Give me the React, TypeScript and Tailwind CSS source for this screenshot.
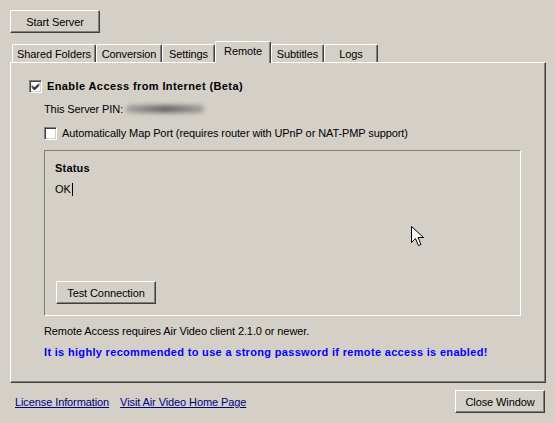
const btnClass =
  'flex items-center justify-center border border-t-white border-l-white border-r-[#404040] border-b-[#404040] bg-[#d4d0c8] shadow-[inset_-1px_-1px_0_#808080] text-[11px] text-black'

const tabs = [
  { label: 'Shared Folders', width: 'w-[84px]' },
  { label: 'Conversion', width: 'w-[66px]' },
  { label: 'Settings', width: 'w-[53px]' },
  { label: 'Remote', width: 'w-[56px]', active: true },
  { label: 'Subtitles', width: 'w-[53px]' },
  { label: 'Logs', width: 'w-[54px]' },
]

function Checkbox({ checked }: { checked?: boolean }) {
  return (
    <div className="flex h-[13px] w-[13px] shrink-0 items-center justify-center border border-t-[#808080] border-l-[#808080] border-r-white border-b-white bg-white shadow-[inset_1px_1px_0_#404040,inset_-1px_-1px_0_#d4d0c8]">
      {checked && (
        <svg width="9" height="9" viewBox="0 0 9 9">
          <path d="M1 3.5 L3.5 6 L8 1.5 M1 4.5 L3.5 7 L8 2.5 M1 5.5 L3.5 8 L8 3.5" stroke="#000" strokeWidth="1" fill="none" />
        </svg>
      )}
    </div>
  )
}

function Tab({ label, width, active }: { label: string; width: string; active?: boolean }) {
  if (active) {
    return (
      <div
        className={`relative z-10 -mb-[1px] flex h-[22px] items-start justify-center rounded-t-[2px] border border-b-0 border-t-white border-l-white border-r-[#404040] bg-[#d4d0c8] pt-[2px] shadow-[inset_-1px_0_0_#808080] ${width}`}
      >
        {label}
      </div>
    )
  }
  return (
    <div
      className={`flex h-[18px] items-center justify-center rounded-t-[2px] border border-b-0 border-t-white border-l-white border-r-[#404040] bg-[#d4d0c8] shadow-[inset_-1px_0_0_#808080] ${width}`}
    >
      {label}
    </div>
  )
}

export default function App() {
  return (
    <div
      className="relative flex h-[423px] w-[555px] flex-col bg-[#d4d0c8] text-[11px] leading-[14px] tracking-[-0.1px] text-black"
      style={{ fontFamily: '"Liberation Sans", Arial, sans-serif' }}
    >
      <div className="pt-[10px] pl-[10px]">
        <button className={`${btnClass} h-[23px] w-[90px]`}>Start Server</button>
      </div>

      <div className="mt-[8px] flex items-end pl-[12px]">
        {tabs.map((tab) => (
          <Tab key={tab.label} {...tab} />
        ))}
      </div>

      <div className="ml-[10px] flex h-[321px] w-[536px] flex-col border border-t-white border-l-white border-r-[#404040] border-b-[#404040] pl-[18px] shadow-[inset_-1px_-1px_0_#808080]">
        <div className="mt-[16px] flex items-center gap-[5px]">
          <Checkbox checked />
          <span className="font-bold tracking-[0.4px]">Enable Access from Internet (Beta)</span>
        </div>

        <div className="ml-[15px] flex flex-col">
          <div className="mt-[9px] flex items-center">
            <span>This Server PIN:</span>
            <div className="ml-[3px] h-[8px] w-[78px] rounded-full bg-linear-to-r from-[#a8a6a1] via-[#6a6a6a] to-[#a4a29d] blur-[2px]" />
          </div>

          <div className="mt-[10px] flex items-center gap-[5px]">
            <Checkbox />
            <span>Automatically Map Port (requires router with UPnP or NAT-PMP support)</span>
          </div>

          <div className="mt-[10px] flex h-[166px] w-[477px] flex-col border border-t-[#808080] border-l-[#808080] border-r-white border-b-white pl-[10px] pb-[11px]">
            <div className="mt-[10px] font-bold tracking-[0.2px]">Status</div>
            <div className="mt-[7px] flex items-center">
              <span>OK</span>
              <span className="ml-[1px] h-[13px] w-[1px] bg-black" />
            </div>
            <button className={`${btnClass} mt-auto ml-[1px] h-[23px] w-[100px]`}>Test Connection</button>
          </div>

          <div className="mt-[8px]">Remote Access requires Air Video client 2.1.0 or newer.</div>
          <div className="mt-[7px] font-bold tracking-[0.32px] text-[#0000ff]">
            It is highly recommended to use a strong password if remote access is enabled!
          </div>
        </div>
      </div>

      <div className="mt-[7px] flex items-center justify-between pr-[10px] pl-[15px]">
        <div className="flex gap-[11px] text-[#000080]">
          <span className="underline">License Information</span>
          <span className="underline">Visit Air Video Home Page</span>
        </div>
        <button className={`${btnClass} h-[23px] w-[90px]`}>Close Window</button>
      </div>

      <svg className="absolute top-[226px] left-[411px]" width="14" height="21" viewBox="0 0 14 21">
        <path
          d="M0.5 0.5 L0.5 16.5 L4.5 12.5 L7.5 19.5 L10 18.5 L7 11.5 L12.5 11.5 Z"
          fill="#fff"
          stroke="#000"
          strokeWidth="1"
          strokeLinejoin="miter"
        />
      </svg>
    </div>
  )
}
